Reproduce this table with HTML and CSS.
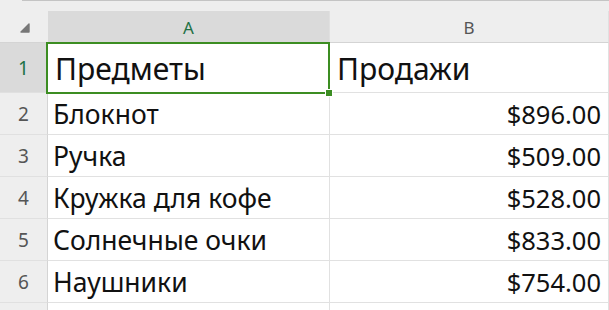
FILE: index.html
```html
<!DOCTYPE html>
<html lang="ru">
<head>
    <meta charset="UTF-8">
    <meta name="viewport" content="width=device-width, initial-scale=1.0">
    <title>Продажи</title>
    <link rel="stylesheet" href="styles.css">
</head>
<body>
    <div class="toolbar"></div>
    <div class="sheet">
        <!-- шапка таблицы -->
        <div class="corner">
            <svg width="10" height="10" viewBox="0 0 10 10"><path d="M9 1 L9 9 L1 9 Z" fill="#777" stroke="#777" stroke-width="1.4" stroke-linejoin="round"/></svg>
        </div>
        <div class="colHead active">A</div>
        <div class="colHead">B</div>

        <div class="rowHead active first">1</div>
        <div class="cell first">Предметы</div>
        <div class="cell first">Продажи</div>

        <div class="rowHead">2</div>
        <div class="cell">Блокнот</div>
        <div class="cell num">$896.00</div>

        <div class="rowHead">3</div>
        <div class="cell">Ручка</div>
        <div class="cell num">$509.00</div>

        <div class="rowHead">4</div>
        <div class="cell">Кружка для кофе</div>
        <div class="cell num">$528.00</div>

        <div class="rowHead">5</div>
        <div class="cell">Солнечные очки</div>
        <div class="cell num">$833.00</div>

        <div class="rowHead">6</div>
        <div class="cell">Наушники</div>
        <div class="cell num">$754.00</div>

        <div class="rowHead"></div>
        <div class="cell"></div>
        <div class="cell"></div>

        <!-- выделенная ячейка A1 -->
        <div class="selection"><span class="handle"></span></div>
    </div>
</body>
</html>
```

FILE: styles.css
```css
body{
    margin: 0;
    width: 609px;
    height: 310px;
    overflow: hidden;
    background: #fff;
    font-family: "Noto Sans", "Open Sans", sans-serif;
    color: #111;
}
.toolbar{
    height: 10px;
    background: #eeeeee;
    border-top: 1px solid #c4c4c4;
    margin-left: 22px;
    box-shadow: -22px 0 0 #eeeeee;
}
.sheet{
    position: relative;
    display: grid;
    grid-template-columns: 48px 282px 279px;
    grid-template-rows: 32px 50px repeat(6, 42px);
}
/* заголовки строк и столбцов */
.corner, .colHead, .rowHead{
    background: #eeeeee;
    color: #555;
    display: flex;
    align-items: center;
    justify-content: center;
    box-sizing: border-box;
}
.corner{
    border-bottom: 1px solid #d4d4d4;
    align-items: flex-end;
    justify-content: flex-end;
    padding: 0 18px 9px 0;
}
.colHead{
    font-size: 17px;
    border-bottom: 1px solid #d4d4d4;
    border-right: 1px solid #e0e0e0;
    padding-top: 2px;
}
.rowHead{
    font-size: 19px;
    border-right: 1px solid #d4d4d4;
    border-bottom: 1px solid #e0e0e0;
}
.colHead.active, .rowHead.active{
    background: #dadada;
    color: #1e7145;
}
/* ячейки */
.cell{
    box-sizing: border-box;
    border-right: 1px solid #e1e1e1;
    border-bottom: 1px solid #e1e1e1;
    font-size: 26.5px;
    padding: 0 7px 0 5px;
    display: flex;
    align-items: center;
    white-space: nowrap;
}
.cell.first{
    font-size: 30px;
    padding-left: 7px;
    padding-top: 2px;
}
.num{
    font-size: 25.5px;
    justify-content: flex-end;
}
.selection{
    position: absolute;
    left: 46px;
    top: 31px;
    width: 284px;
    height: 52px;
    box-sizing: border-box;
    border: 2px solid #3c8d22;
}
.handle{
    position: absolute;
    right: -5px;
    bottom: -5px;
    width: 6px;
    height: 6px;
    background: #3c8d22;
    border: 1px solid #fff;
}
```
